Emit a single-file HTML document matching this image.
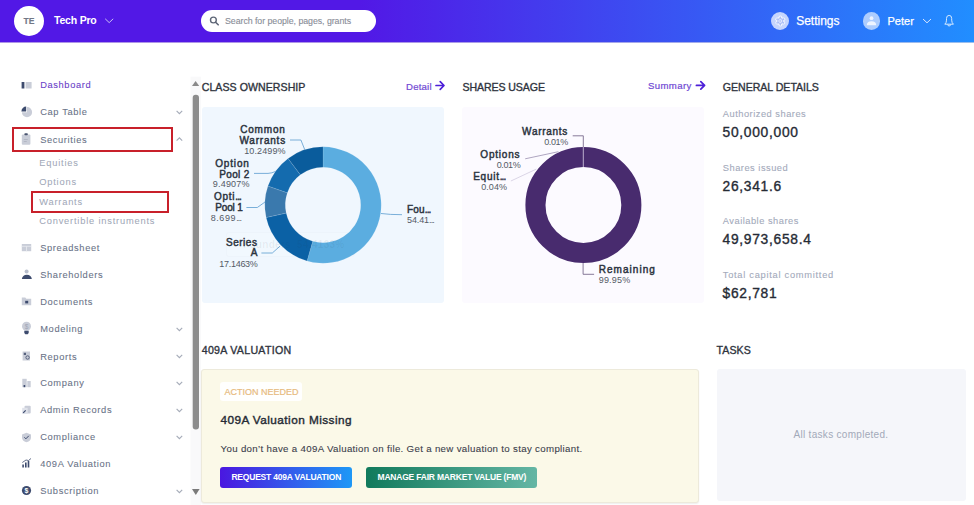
<!DOCTYPE html><html><head><meta charset="utf-8"><style>
html,body{margin:0;padding:0;width:974px;height:505px;overflow:hidden;background:#fff;position:relative;font-family:"Liberation Sans",sans-serif}
.t{position:absolute;line-height:1;white-space:nowrap}
.abs{position:absolute}
svg{position:absolute;left:0;top:0;overflow:visible}
</style></head><body>
<div class="abs" style="left:0;top:0;width:974px;height:42px;background:linear-gradient(90deg,#5218e6 37%,#218eff 100%)"></div>
<div class="abs" style="left:0;top:42px;width:974px;height:1px;background:linear-gradient(90deg,#4a14c8 37%,#1d70d8 100%);opacity:0.45"></div>
<div class="abs" style="left:13.6px;top:6px;width:30px;height:30px;border-radius:50%;background:#fff"></div>
<div class="t" style="left:23.4px;top:16.69px;font-size:8.6px;color:#727785;font-weight:700;letter-spacing:0.2px;-webkit-text-stroke:0.15px #727785">TE</div>
<div class="t" style="left:54px;top:15.08px;font-size:10.5px;color:#fff;font-weight:700;letter-spacing:-0.2px;">Tech Pro</div>
<svg width="974" height="505"><path d="M105.2,18.8 L109.2,22.6 L113.2,18.8" fill="none" stroke="#c9bff5" stroke-width="1"/></svg>
<div class="abs" style="left:201px;top:10px;width:175px;height:22px;border-radius:11px;background:#fff"></div>
<svg width="974" height="505"><circle cx="213.4" cy="20" r="2.9" fill="none" stroke="#5f6777" stroke-width="1.4"/><path d="M215.6,22.2 L218.2,24.8" stroke="#5f6777" stroke-width="1.6" stroke-linecap="round"/></svg>
<div class="t" style="left:225px;top:16.52px;font-size:8.8px;color:#8a8e98;font-weight:400;letter-spacing:-0.05px;-webkit-text-stroke:0.12px #8a8e98">Search for people, pages, grants</div>
<div class="abs" style="left:771.2px;top:12px;width:18px;height:18px;border-radius:50%;background:rgba(255,255,255,0.72)"></div>
<svg width="974" height="505"><circle cx="780.3" cy="21" r="3.9" fill="#f2f5ff"/><circle cx="780.30" cy="17.30" r="1.75" fill="#f2f5ff"/><circle cx="783.50" cy="19.15" r="1.75" fill="#f2f5ff"/><circle cx="783.50" cy="22.85" r="1.75" fill="#f2f5ff"/><circle cx="780.30" cy="24.70" r="1.75" fill="#f2f5ff"/><circle cx="777.10" cy="22.85" r="1.75" fill="#f2f5ff"/><circle cx="777.10" cy="19.15" r="1.75" fill="#f2f5ff"/><circle cx="780.3" cy="21" r="3.0" fill="#aabef6"/><circle cx="780.30" cy="17.30" r="0.85" fill="#aabef6"/><circle cx="783.50" cy="19.15" r="0.85" fill="#aabef6"/><circle cx="783.50" cy="22.85" r="0.85" fill="#aabef6"/><circle cx="780.30" cy="24.70" r="0.85" fill="#aabef6"/><circle cx="777.10" cy="22.85" r="0.85" fill="#aabef6"/><circle cx="777.10" cy="19.15" r="0.85" fill="#aabef6"/><circle cx="780.3" cy="21" r="1.5" fill="none" stroke="#f2f5ff" stroke-width="0.8"/><circle cx="780.3" cy="21" r="0.45" fill="#f2f5ff"/></svg>
<div class="t" style="left:796.2px;top:15.00px;font-size:12px;color:#fff;font-weight:400;letter-spacing:0.0px;-webkit-text-stroke:0.25px #fff">Settings</div>
<div class="abs" style="left:862.7px;top:12px;width:17.7px;height:17.7px;border-radius:50%;background:rgba(255,255,255,0.62)"></div>
<svg width="974" height="505"><circle cx="871.5" cy="18.2" r="1.9" fill="#eef4ff"/><path d="M866.8,25.3 Q866.8,21.3 871.5,21.3 Q876.2,21.3 876.2,25.3 Z" fill="#eef4ff"/></svg>
<div class="t" style="left:887.5px;top:15.85px;font-size:11px;color:#fff;font-weight:400;letter-spacing:0px;-webkit-text-stroke:0.25px #fff">Peter</div>
<svg width="974" height="505"><path d="M923,19 L927,22.8 L931,19" fill="none" stroke="#d8e6ff" stroke-width="1"/><path d="M944.8,24.2 Q946.5,22.8 946.5,20.2 L946.5,18.4 Q946.5,15.4 949.1,15.4 Q951.7,15.4 951.7,18.4 L951.7,20.2 Q951.7,22.8 953.4,24.2 Z" fill="none" stroke="#d6eaff" stroke-width="1" stroke-linejoin="round"/><path d="M947.7,24.5 A1.45,1.45 0 0 0 950.6,24.5" fill="none" stroke="#d6eaff" stroke-width="1"/></svg>
<div class="t" style="left:40.2px;top:81.19px;font-size:9.3px;color:#6a3ec8;font-weight:400;letter-spacing:0.62px;-webkit-text-stroke:0.08px #6a3ec8">Dashboard</div>
<div class="t" style="left:40.2px;top:108.39px;font-size:9.3px;color:#6a7388;font-weight:400;letter-spacing:0.62px;-webkit-text-stroke:0.08px #6a7388">Cap Table</div>
<div class="t" style="left:40.2px;top:135.50px;font-size:9.3px;color:#6a7388;font-weight:400;letter-spacing:0.62px;-webkit-text-stroke:0.08px #6a7388">Securities</div>
<div class="t" style="left:39.2px;top:158.59px;font-size:9.3px;color:#a1a8b8;font-weight:400;letter-spacing:0.8px;-webkit-text-stroke:0.05px #a1a8b8">Equities</div>
<div class="t" style="left:39.2px;top:178.29px;font-size:9.3px;color:#a1a8b8;font-weight:400;letter-spacing:0.8px;-webkit-text-stroke:0.05px #a1a8b8">Options</div>
<div class="t" style="left:39.2px;top:197.89px;font-size:9.3px;color:#a1a8b8;font-weight:400;letter-spacing:0.8px;-webkit-text-stroke:0.05px #a1a8b8">Warrants</div>
<div class="t" style="left:39.2px;top:217.29px;font-size:9.3px;color:#a1a8b8;font-weight:400;letter-spacing:0.8px;-webkit-text-stroke:0.05px #a1a8b8">Convertible instruments</div>
<div class="t" style="left:40.2px;top:244.00px;font-size:9.3px;color:#6a7388;font-weight:400;letter-spacing:0.65px;-webkit-text-stroke:0.08px #6a7388">Spreadsheet</div>
<div class="t" style="left:40.2px;top:271.00px;font-size:9.3px;color:#6a7388;font-weight:400;letter-spacing:0.65px;-webkit-text-stroke:0.08px #6a7388">Shareholders</div>
<div class="t" style="left:40.2px;top:297.70px;font-size:9.3px;color:#6a7388;font-weight:400;letter-spacing:0.65px;-webkit-text-stroke:0.08px #6a7388">Documents</div>
<div class="t" style="left:40.2px;top:325.10px;font-size:9.3px;color:#6a7388;font-weight:400;letter-spacing:0.65px;-webkit-text-stroke:0.08px #6a7388">Modeling</div>
<div class="t" style="left:40.2px;top:352.50px;font-size:9.3px;color:#6a7388;font-weight:400;letter-spacing:0.65px;-webkit-text-stroke:0.08px #6a7388">Reports</div>
<div class="t" style="left:40.2px;top:379.30px;font-size:9.3px;color:#6a7388;font-weight:400;letter-spacing:0.65px;-webkit-text-stroke:0.08px #6a7388">Company</div>
<div class="t" style="left:40.2px;top:406.00px;font-size:9.3px;color:#6a7388;font-weight:400;letter-spacing:0.65px;-webkit-text-stroke:0.08px #6a7388">Admin Records</div>
<div class="t" style="left:40.2px;top:433.00px;font-size:9.3px;color:#6a7388;font-weight:400;letter-spacing:0.65px;-webkit-text-stroke:0.08px #6a7388">Compliance</div>
<div class="t" style="left:40.2px;top:460.30px;font-size:9.3px;color:#6a7388;font-weight:400;letter-spacing:0.65px;-webkit-text-stroke:0.08px #6a7388">409A Valuation</div>
<div class="t" style="left:40.2px;top:487.00px;font-size:9.3px;color:#6a7388;font-weight:400;letter-spacing:0.65px;-webkit-text-stroke:0.08px #6a7388">Subscription</div>
<div class="abs" style="left:11.7px;top:127px;width:157.3px;height:20.7px;border:2px solid #c8202a"></div>
<div class="abs" style="left:31.1px;top:190.5px;width:133.9px;height:18.6px;border:2px solid #c8202a"></div>
<svg width="974" height="505"><path d="M176.6,110.9 L179.4,113.7 L182.2,110.9" fill="none" stroke="#a6acb9" stroke-width="1.15"/><path d="M176.6,327.9 L179.4,330.7 L182.2,327.9" fill="none" stroke="#a6acb9" stroke-width="1.15"/><path d="M176.6,354.9 L179.4,357.7 L182.2,354.9" fill="none" stroke="#a6acb9" stroke-width="1.15"/><path d="M176.6,381.9 L179.4,384.7 L182.2,381.9" fill="none" stroke="#a6acb9" stroke-width="1.15"/><path d="M176.6,408.9 L179.4,411.7 L182.2,408.9" fill="none" stroke="#a6acb9" stroke-width="1.15"/><path d="M176.6,435.9 L179.4,438.7 L182.2,435.9" fill="none" stroke="#a6acb9" stroke-width="1.15"/><path d="M176.6,489.9 L179.4,492.7 L182.2,489.9" fill="none" stroke="#a6acb9" stroke-width="1.15"/><path d="M176.6,140.6 L179.4,137.8 L182.2,140.6" fill="none" stroke="#a6acb9" stroke-width="1.15"/><rect x="190.5" y="76.7" width="10.5" height="429" fill="#f9f9fa"/><path d="M192,86 L195.6,81 L199.2,86 Z" fill="#8a8a8a"/><rect x="192.7" y="94.8" width="6.3" height="334.7" rx="3" fill="#8c8c8c"/><path d="M192,489 L195.8,495 L199.6,489 Z" fill="#7a7a7a"/><rect x="21.6" y="82" width="2.8" height="6.5" fill="#3d4b6e"/><rect x="25.6" y="82" width="6" height="6.5" fill="#c9cdd8"/><path d="M27,112.2 L27,107.1 A5.1,5.1 0 1 1 21.9,112.2 Z" fill="#c9cdd8"/><path d="M26.2,111.4 L26.2,106.6 A4.8,4.8 0 0 0 21.4,111.4 Z" fill="#3d4b6e"/><rect x="21.8" y="134.5" width="8.6" height="10.2" rx="1" fill="#c9cdd8"/><rect x="24.4" y="133.2" width="3.4" height="2" rx="0.8" fill="#4a5570"/><path d="M23.8,139.5h4 M23.8,141.5h3" stroke="#a9aebb" stroke-width="0.7"/><rect x="21.8" y="244" width="9.4" height="7.2" fill="#c9cdd8"/><path d="M21.8,246.3h9.4 M26.5,246.3v5" stroke="#e9ebf0" stroke-width="0.8"/><circle cx="26.6" cy="271.4" r="2" fill="#b9bfcd"/><path d="M21.9,279 A4.95,4.3 0 0 1 31.8,279 Z" fill="#3d4b6e"/><path d="M21.8,297.5 h3.5 l1,1.2 h4.9 v6.6 h-9.4 Z" fill="#c9cdd8"/><rect x="25.2" y="300.8" width="3" height="2.6" fill="#3d4b6e"/><circle cx="26.5" cy="326.2" r="4.5" fill="#c9cdd8"/><path d="M24.3,330.8 h4.4 v2.2 l-1,1.3 h-2.4 l-1,-1.3 Z" fill="#3d4b6e"/><text x="26.5" y="328.6" font-size="6.5" text-anchor="middle" fill="#a0a6b5" font-family="Liberation Sans">$</text><rect x="22.6" y="351.5" width="7.4" height="9" fill="#c9cdd8"/><rect x="23.8" y="352.8" width="2.2" height="2.2" fill="#56617c"/><circle cx="27.6" cy="357.5" r="1.7" fill="none" stroke="#56617c" stroke-width="1"/><rect x="22.3" y="378.8" width="4.4" height="8.4" fill="#c9cdd8"/><rect x="27.3" y="381" width="3.4" height="6.2" fill="#c9cdd8"/><rect x="23.6" y="385" width="1.6" height="2.2" fill="#3d4b6e"/><rect x="24.5" y="405.8" width="6.2" height="7.6" rx="1" fill="#c9cdd8"/><rect x="22.2" y="407.8" width="5.5" height="6.2" fill="#dfe2ea"/><path d="M23.2,412.8 l2.5,-2.5" stroke="#3d4b6e" stroke-width="1.2"/><path d="M26.5,432.8 L31,434.4 L31,437.5 Q31,441 26.5,442.3 Q22,441 22,437.5 L22,434.4 Z" fill="#c9cdd8"/><path d="M24.4,437.3 L25.9,438.8 L28.8,435.8" fill="none" stroke="#3d4b6e" stroke-width="1"/><rect x="22.3" y="464.5" width="1.6" height="3" fill="#3d4b6e"/><rect x="25" y="462.5" width="1.6" height="5" fill="#3d4b6e"/><rect x="27.7" y="461" width="1.6" height="6.5" fill="#3d4b6e"/><path d="M22.3,462.5 L26,460 L28.5,460.5 L31,458.5" fill="none" stroke="#3d4b6e" stroke-width="0.8"/><circle cx="26.5" cy="490.5" r="4.6" fill="#3d4b6e"/><text x="26.5" y="493.3" font-size="7" font-weight="700" text-anchor="middle" fill="#fff" font-family="Liberation Sans">$</text></svg>
<div class="t" style="left:201.7px;top:81.79px;font-size:10.6px;color:#2f343e;font-weight:400;letter-spacing:0.05px;-webkit-text-stroke:0.35px #2f343e">CLASS OWNERSHIP</div>
<div class="t" style="left:406px;top:81.64px;font-size:9.6px;color:#7049d4;font-weight:400;letter-spacing:0.2px;-webkit-text-stroke:0.2px #7049d4">Detail</div>
<div class="t" style="left:462.5px;top:81.79px;font-size:10.6px;color:#2f343e;font-weight:400;letter-spacing:-0.1px;-webkit-text-stroke:0.35px #2f343e">SHARES USAGE</div>
<div class="t" style="left:647.9px;top:81.44px;font-size:9.6px;color:#7049d4;font-weight:400;letter-spacing:0.4px;-webkit-text-stroke:0.2px #7049d4">Summary</div>
<div class="t" style="left:722.8px;top:81.79px;font-size:10.6px;color:#2f343e;font-weight:400;letter-spacing:-0.03px;-webkit-text-stroke:0.35px #2f343e">GENERAL DETAILS</div>
<svg width="974" height="505"><path d="M436,85.5 h7.6 M440.2,81.7 L444,85.5 L440.2,89.3" fill="none" stroke="#4d20d8" stroke-width="1.7" stroke-linecap="round" stroke-linejoin="round"/><path d="M696.4,85.4 h7.8 M700.8,81.6 L704.6,85.4 L700.8,89.2" fill="none" stroke="#4d20d8" stroke-width="1.7" stroke-linecap="round" stroke-linejoin="round"/></svg>
<div class="abs" style="left:201.7px;top:107px;width:242.2px;height:196.2px;background:#f0f7fe;border-radius:3px"></div>
<div class="abs" style="left:462px;top:107px;width:242.3px;height:196.2px;background:#fcfaff;border-radius:3px"></div>
<div class="abs" style="left:225.8px;top:231.5px;width:127px;height:23.5px;border:1px solid rgba(225,232,242,0.25);border-radius:3px;background:rgba(255,255,255,0.12)"></div>
<svg width="974" height="505"><path d="M323.00,146.80 A58.2,58.2 0 1 1 307.07,260.98 L312.68,241.26 A37.7,37.7 0 1 0 323.00,167.30 Z" fill="#5badE0" stroke="rgba(230,240,250,0.25)" stroke-width="0.5"/>
<path d="M307.07,260.98 A58.2,58.2 0 0 1 266.15,217.48 L286.18,213.09 A37.7,37.7 0 0 0 312.68,241.26 Z" fill="#0b61a5" stroke="rgba(230,240,250,0.25)" stroke-width="0.5"/>
<path d="M266.15,217.48 A58.2,58.2 0 0 1 267.95,186.12 L287.34,192.77 A37.7,37.7 0 0 0 286.18,213.09 Z" fill="#3a79ad" stroke="rgba(230,240,250,0.25)" stroke-width="0.5"/>
<path d="M267.95,186.12 A58.2,58.2 0 0 1 288.05,158.46 L300.36,174.85 A37.7,37.7 0 0 0 287.34,192.77 Z" fill="#146bae" stroke="rgba(230,240,250,0.25)" stroke-width="0.5"/>
<path d="M288.05,158.46 A58.2,58.2 0 0 1 323.00,146.80 L323.00,167.30 A37.7,37.7 0 0 0 300.36,174.85 Z" fill="#0a5c9c" stroke="rgba(230,240,250,0.25)" stroke-width="0.5"/><path d="M290,140 L300.9,140 L304.8,149.8" fill="none" stroke="#5a9ccf" stroke-width="0.8"/><path d="M254,173.4 L268,173.4 Q272,173.2 275.5,171.4" fill="none" stroke="#5a9ccf" stroke-width="0.8"/><path d="M246.4,207.5 L257.3,207.5 L264.9,202.1" fill="none" stroke="#5a9ccf" stroke-width="0.8"/><path d="M261.4,253 L272.3,253 L280.2,246" fill="none" stroke="#5a9ccf" stroke-width="0.8"/><path d="M381,213.5 Q390,214.7 402,214.7" fill="none" stroke="#5a9ccf" stroke-width="0.8"/></svg>
<div class="t" style="left:243px;top:239.70px;font-size:10px;color:rgba(40,50,70,0.07);font-weight:700;letter-spacing:0.3px;">Founders&nbsp;&nbsp;54.4133%</div>
<div class="t" style="right:688.4px;top:124.80px;font-size:10px;color:#2c3440;font-weight:400;letter-spacing:0.8px;text-align:right;-webkit-text-stroke:0.45px #2c3440">Common</div>
<div class="t" style="right:688px;top:135.70px;font-size:10px;color:#2c3440;font-weight:400;letter-spacing:0.8px;text-align:right;-webkit-text-stroke:0.45px #2c3440">Warrants</div>
<div class="t" style="right:688.4px;top:146.55px;font-size:9px;color:#545a66;font-weight:400;letter-spacing:0.1px;text-align:right;">10.2499%</div>
<div class="t" style="right:724.3px;top:158.80px;font-size:10px;color:#2c3440;font-weight:400;letter-spacing:0.83px;text-align:right;-webkit-text-stroke:0.45px #2c3440">Option</div>
<div class="t" style="right:724.3px;top:170.10px;font-size:10px;color:#2c3440;font-weight:400;letter-spacing:0.35px;text-align:right;-webkit-text-stroke:0.45px #2c3440">Pool 2</div>
<div class="t" style="right:724.3px;top:180.35px;font-size:9px;color:#545a66;font-weight:400;letter-spacing:0.2px;text-align:right;">9.4907%</div>
<div class="t" style="right:731.5px;top:192.30px;font-size:10px;color:#2c3440;font-weight:400;letter-spacing:0.7px;text-align:right;-webkit-text-stroke:0.45px #2c3440">Opti<span style="letter-spacing:-0.9px">..</span>.</div>
<div class="t" style="right:731.5px;top:202.80px;font-size:10px;color:#2c3440;font-weight:400;letter-spacing:-0.2px;text-align:right;-webkit-text-stroke:0.45px #2c3440">Pool 1</div>
<div class="t" style="right:731.5px;top:214.15px;font-size:9px;color:#545a66;font-weight:400;letter-spacing:0.6px;text-align:right;">8.699<span style="letter-spacing:-0.9px">..</span>.</div>
<div class="t" style="right:716.5px;top:238.40px;font-size:10px;color:#2c3440;font-weight:400;letter-spacing:0.53px;text-align:right;-webkit-text-stroke:0.45px #2c3440">Series</div>
<div class="t" style="right:716.5px;top:248.30px;font-size:10px;color:#2c3440;font-weight:400;letter-spacing:0px;text-align:right;-webkit-text-stroke:0.45px #2c3440">A</div>
<div class="t" style="right:716.5px;top:260.05px;font-size:9px;color:#545a66;font-weight:400;letter-spacing:-0.3px;text-align:right;">17.1463%</div>
<div class="t" style="left:407px;top:205.00px;font-size:10px;color:#2c3440;font-weight:400;letter-spacing:0.2px;-webkit-text-stroke:0.45px #2c3440">Fou<span style="letter-spacing:-0.9px">..</span>.</div>
<div class="t" style="left:407px;top:216.05px;font-size:9px;color:#545a66;font-weight:400;letter-spacing:-0.1px;">54.41<span style="letter-spacing:-0.9px">..</span>.</div>
<svg width="974" height="505"><circle cx="583.4" cy="205" r="47.95" fill="none" stroke="#482b6e" stroke-width="20.1"/><path d="M583.3,147 L583.3,167.2" stroke="#d9d0e6" stroke-width="0.8"/><path d="M572.7,135.8 L583.3,135.8 L583.3,147" fill="none" stroke="#6a5a80" stroke-width="0.8"/><path d="M525.2,158.8 L558.4,151.7" fill="none" stroke="#9a8fb0" stroke-width="0.8"/><path d="M510.9,181 L536.3,169.1" fill="none" stroke="#d2cbe0" stroke-width="0.8"/><path d="M583.1,263 L583.1,274.3 L594.1,274.3" fill="none" stroke="#6a5a80" stroke-width="0.8"/></svg>
<div class="t" style="right:406.1px;top:126.90px;font-size:10px;color:#2c3440;font-weight:400;letter-spacing:0.7px;text-align:right;-webkit-text-stroke:0.45px #2c3440">Warrants</div>
<div class="t" style="right:406.1px;top:138.05px;font-size:9px;color:#545a66;font-weight:400;letter-spacing:-0.35px;text-align:right;">0.01%</div>
<div class="t" style="right:453.6px;top:149.60px;font-size:10px;color:#2c3440;font-weight:400;letter-spacing:0.8px;text-align:right;-webkit-text-stroke:0.45px #2c3440">Options</div>
<div class="t" style="right:453.6px;top:160.65px;font-size:9px;color:#545a66;font-weight:400;letter-spacing:-0.35px;text-align:right;">0.01%</div>
<div class="t" style="right:467px;top:171.80px;font-size:10px;color:#2c3440;font-weight:400;letter-spacing:0.74px;text-align:right;-webkit-text-stroke:0.45px #2c3440">Equit<span style="letter-spacing:-0.9px">..</span>.</div>
<div class="t" style="right:467px;top:183.25px;font-size:9px;color:#545a66;font-weight:400;letter-spacing:0.05px;text-align:right;">0.04%</div>
<div class="t" style="left:598.7px;top:264.60px;font-size:10px;color:#2c3440;font-weight:400;letter-spacing:1.05px;-webkit-text-stroke:0.45px #2c3440">Remaining</div>
<div class="t" style="left:598.7px;top:275.85px;font-size:9px;color:#545a66;font-weight:400;letter-spacing:0.2px;">99.95%</div>
<div class="t" style="left:722.8px;top:110.09px;font-size:9.3px;color:#a3aabb;font-weight:400;letter-spacing:0.5px;-webkit-text-stroke:0.1px #a3aabb">Authorized shares</div>
<div class="t" style="left:722.6px;top:126.07px;font-size:13.8px;color:#262b35;font-weight:400;letter-spacing:0.7px;-webkit-text-stroke:0.35px #262b35">50,000,000</div>
<div class="t" style="left:722.8px;top:163.69px;font-size:9.3px;color:#a3aabb;font-weight:400;letter-spacing:0.5px;-webkit-text-stroke:0.1px #a3aabb">Shares issued</div>
<div class="t" style="left:722.6px;top:179.57px;font-size:13.8px;color:#262b35;font-weight:400;letter-spacing:0.7px;-webkit-text-stroke:0.35px #262b35">26,341.6</div>
<div class="t" style="left:722.8px;top:217.29px;font-size:9.3px;color:#a3aabb;font-weight:400;letter-spacing:0.5px;-webkit-text-stroke:0.1px #a3aabb">Available shares</div>
<div class="t" style="left:722.6px;top:233.07px;font-size:13.8px;color:#262b35;font-weight:400;letter-spacing:0.7px;-webkit-text-stroke:0.35px #262b35">49,973,658.4</div>
<div class="t" style="left:722.8px;top:270.90px;font-size:9.3px;color:#a3aabb;font-weight:400;letter-spacing:0.72px;-webkit-text-stroke:0.1px #a3aabb">Total capital committed</div>
<div class="t" style="left:722.6px;top:286.57px;font-size:13.8px;color:#262b35;font-weight:400;letter-spacing:0.7px;-webkit-text-stroke:0.35px #262b35">$62,781</div>
<div class="t" style="left:201.7px;top:344.69px;font-size:10.6px;color:#2f343e;font-weight:400;letter-spacing:0.3px;-webkit-text-stroke:0.35px #2f343e">409A VALUATION</div>
<div class="abs" style="left:201.1px;top:369px;width:496.2px;height:131.5px;background:#fbf9e8;border:1px solid #edeadb;border-radius:3px;box-shadow:0 1px 1.5px rgba(0,0,0,0.07)"></div>
<div class="abs" style="left:220.4px;top:381.8px;width:81.9px;height:19.2px;background:#fff;border-radius:3px;opacity:0.92"></div>
<div class="t" style="left:224.4px;top:387.95px;font-size:9px;color:#e7bb80;font-weight:400;letter-spacing:0px;-webkit-text-stroke:0.2px #e7bb80">ACTION NEEDED</div>
<div class="t" style="left:220.4px;top:414.57px;font-size:11.8px;color:#262b35;font-weight:400;letter-spacing:0.45px;-webkit-text-stroke:0.4px #262b35">409A Valuation Missing</div>
<div class="t" style="left:220.6px;top:443.75px;font-size:9.7px;color:#3c414c;font-weight:400;letter-spacing:0.32px;-webkit-text-stroke:0.1px #3c414c">You don&#8217;t have a 409A Valuation on file. Get a new valuation to stay compliant.</div>
<div class="abs" style="left:220.2px;top:466.8px;width:131.4px;height:21.7px;border-radius:3px;background:linear-gradient(90deg,#4a17e0,#1e98f6)"></div>
<div class="t" style="left:231.4px;top:473.47px;font-size:8.5px;color:#fff;font-weight:700;letter-spacing:-0.2px;">REQUEST 409A VALUATION</div>
<div class="abs" style="left:366.3px;top:466.8px;width:170.5px;height:21.7px;border-radius:3px;background:linear-gradient(90deg,#117a5c,#64b6a4)"></div>
<div class="t" style="left:377.5px;top:473.47px;font-size:8.5px;color:#fff;font-weight:700;letter-spacing:-0.2px;">MANAGE FAIR MARKET VALUE (FMV)</div>
<div class="t" style="left:716.6px;top:344.59px;font-size:10.6px;color:#2f343e;font-weight:400;letter-spacing:0.05px;-webkit-text-stroke:0.35px #2f343e">TASKS</div>
<div class="abs" style="left:716.6px;top:369.1px;width:249.1px;height:132.4px;background:#f5f6fa;border-radius:3px"></div>
<div class="t" style="left:793.5px;top:429.90px;font-size:10px;color:#a2a9b9;font-weight:400;letter-spacing:0.3px;">All tasks completed.</div>
</body></html>
